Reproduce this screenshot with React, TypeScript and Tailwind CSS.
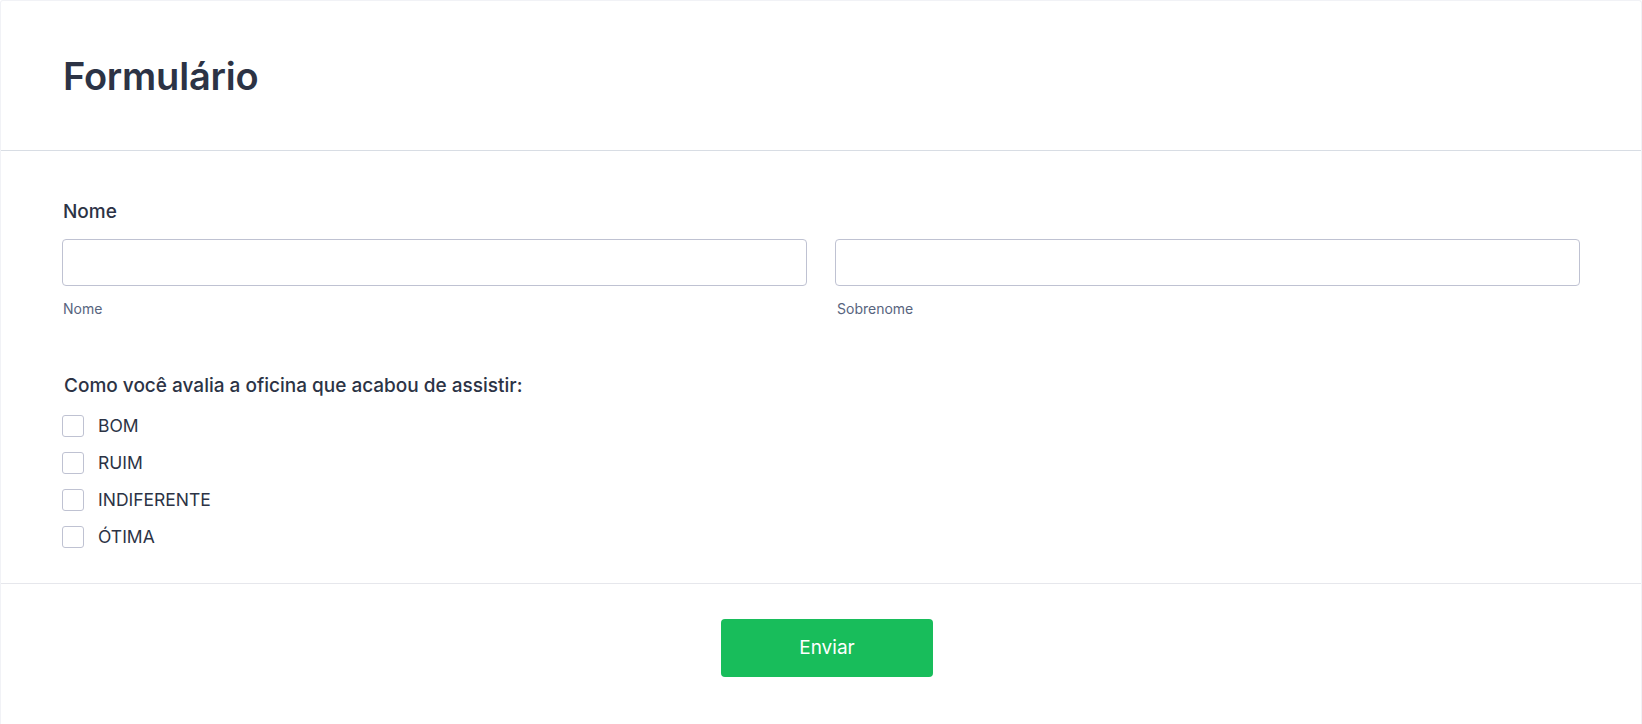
import { useState } from "react";

const options = ["BOM", "RUIM", "INDIFERENTE", "ÓTIMA"];

export default function App() {
  const [checked, setChecked] = useState<string[]>([]);

  function toggle(opt: string) {
    setChecked((prev) =>
      prev.includes(opt) ? prev.filter((o) => o !== opt) : [...prev, opt]
    );
  }

  return (
    <div
      className="min-h-screen bg-white text-[#2c3345]"
      style={{ fontFamily: "Inter, 'Noto Sans', sans-serif" }}
    >
      <div className="h-[724px] border border-b-0 border-[#f1f2f6] rounded-t-[3px] flex flex-col">
        {/* Header */}
        <div className="h-[150px] px-[62px] flex items-center border-b border-[#d8dde4]">
          <h1 className="text-[38px] font-semibold tracking-[-0.2px] leading-none mt-[1px]">
            Formulário
          </h1>
        </div>

        {/* Fields */}
        <div className="px-[61px] pt-[49px] pb-[35px] border-b border-[#e6e7ec]">
          <label className="block text-[19px] font-medium leading-[24px] pl-[1px]">
            Nome
          </label>
          <div className="mt-[15px] grid grid-cols-2 gap-[28px]">
            <div>
              <input
                type="text"
                className="w-full h-[47px] border border-[#bfc2d2] rounded-[4px] px-3 outline-none"
              />
              <div className="mt-[14px] text-[14px] leading-[18px] text-[#57647e] pl-[1px]">
                Nome
              </div>
            </div>
            <div>
              <input
                type="text"
                className="w-full h-[47px] border border-[#bfc2d2] rounded-[4px] px-3 outline-none"
              />
              <div className="mt-[14px] text-[14px] leading-[18px] text-[#57647e] pl-[2px]">
                Sobrenome
              </div>
            </div>
          </div>

          <div className="mt-[56px] text-[19px] font-medium leading-[24px] pl-[2px]">
            Como você avalia a oficina que acabou de assistir:
          </div>
          <div className="mt-[17px] flex flex-col gap-[15px]">
            {options.map((opt) => (
              <label
                key={opt}
                className="flex items-center gap-[14px] h-[22px] cursor-pointer"
                onClick={() => toggle(opt)}
              >
                <span
                  className={`w-[22px] h-[22px] rounded-[3px] border border-[#bfc2d2] bg-white ${
                    checked.includes(opt) ? "bg-[#2e69ff] border-[#2e69ff]" : ""
                  }`}
                />
                <span className="text-[17.5px] leading-[22px]">{opt}</span>
              </label>
            ))}
          </div>
        </div>

        {/* Footer */}
        <div className="flex justify-center pt-[35px] pl-[12px]">
          <button className="w-[212px] h-[58px] rounded-[4px] bg-[#18bd5b] text-white text-[19px]">
            Enviar
          </button>
        </div>
      </div>
    </div>
  );
}
